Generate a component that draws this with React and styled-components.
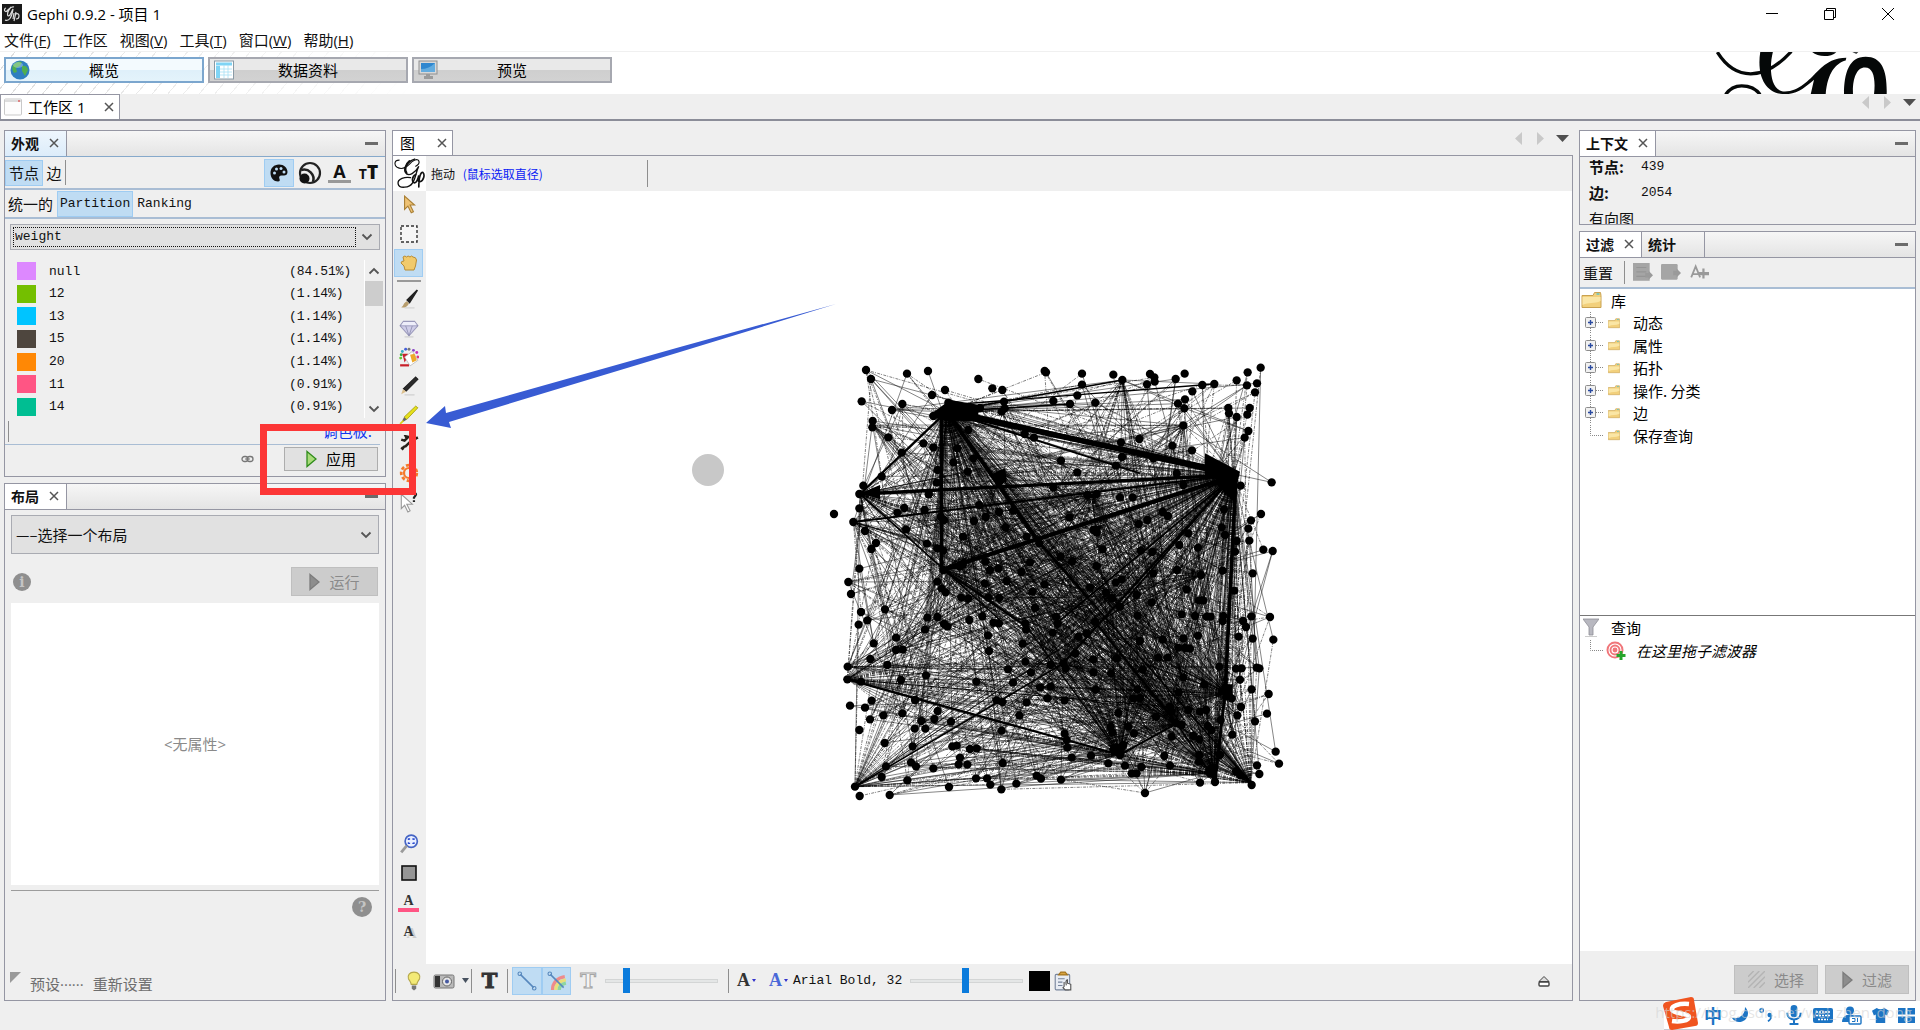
import React from "react";
import styled, { createGlobalStyle, css } from "styled-components";

const CJK = '"Noto Sans CJK SC", sans-serif';
const MONO = '"Liberation Mono", "Noto Sans CJK SC", monospace';
const LINE = "#9596a3";
const BLUE_LINE = "#a9bdd4";

const Global = createGlobalStyle`
  *, *::before, *::after { box-sizing: border-box; }
  body { margin: 0; background: #efefef; color: #111; font: 15px/20px "Open Sans", ${CJK}; }
  button, select, input { font: inherit; color: inherit; margin: 0; }
  button { padding: 0; border: 0; background: none; }
  ul { list-style: none; margin: 0; padding: 0; }
  svg { display: block; flex: none; }
`;

/* ---------- window frame ---------- */
const Window = styled.div`
  min-height: 100vh;
  display: flex;
  flex-direction: column;
  overflow: hidden;
`;
const TitleBar = styled.header`
  height: 28px;
  background: #fff;
  display: flex;
  align-items: center;
  gap: 5px;
  padding: 0 3px 0 2px;
  font-size: 15px;
  color: #000;
`;
const WindowButtons = styled.div`
  margin-left: auto;
  display: flex;
`;
const WindowButton = styled.button`
  width: 58px;
  height: 28px;
  display: grid;
  place-items: center;
`;
const MenuBar = styled.nav`
  height: 24px;
  background: #fff;
  border-bottom: 1px solid #f0f0f0;
  display: flex;
  align-items: center;
  gap: 12px;
  padding-left: 4px;
`;
const MenuItem = styled.button`
  font-family: "Open Sans", ${CJK};
  font-size: 15px;
  line-height: 20px;
`;
const Banner = styled.div`
  height: 42px;
  background: #fff;
  display: flex;
  align-items: flex-start;
  gap: 4px;
  padding: 5px 32px 0 4px;
  position: relative;
  &::before {
    content: "";
    position: absolute;
    inset: 0 auto 0 0;
    width: 420px;
    background: repeating-linear-gradient(130deg, #fff 0 11px, #dedede 11px 12px);
    mask-image: linear-gradient(90deg, #000, transparent);
  }
`;
const BannerLogo = styled.svg`
  margin: -5px 0 0 auto;
`;
const ModeButton = styled.button`
  position: relative;
  width: 200px;
  height: 26px;
  display: grid;
  grid-template-columns: 24px 1fr 24px;
  align-items: center;
  padding: 0 4px;
  color: #000;
  border: 2px solid ${(p) => (p.$active ? "#7ba6ce" : "#a6a8b0")};
  background: ${(p) =>
    p.$active
      ? "linear-gradient(#f3fafe 0 48%, #dff0fa 52%, #e4f3fb)"
      : "linear-gradient(#e9e9e9 0 48%, #cfcfcf 52%, #d2d2d2)"};
`;

/* ---------- tabs ---------- */
const WorkspaceBar = styled.div`
  height: 27px;
  display: flex;
  align-items: stretch;
  border-bottom: 2px solid #8b8d98;
`;
const DocTab = styled.div`
  display: flex;
  align-items: center;
  gap: 6px;
  padding: 0 4px 0 ${(p) => (p.$icon ? "3px" : "7px")};
  width: ${(p) => p.$w}px;
  background: #fff;
  border: 1px solid ${LINE};
  border-bottom: 0;
  color: #000;
  & > button { margin-left: auto; }
`;
const TabNav = styled.div`
  margin-left: auto;
  display: flex;
  align-items: center;
  gap: 15px;
  padding: 0 4px 8px 0;
  & > svg:last-child { margin-left: -3px; }
`;
const CloseBtn = styled.button`
  width: 12px;
  height: 14px;
  display: grid;
  place-items: center;
`;

/* ---------- workspace ---------- */
const Workspace = styled.main`
  flex: 1;
  display: grid;
  grid-template-columns: 382px minmax(0, 1fr) 337px;
  gap: 6px;
  padding: 9px 4px 0;
`;
const Column = styled.div`
  display: flex;
  flex-direction: column;
  gap: 6px;
  min-width: 0;
`;
const Panel = styled.section`
  position: relative;
  display: flex;
  flex-direction: column;
  border: 1px solid ${LINE};
  ${(p) => (p.$h ? css`height: ${p.$h}px;` : css`flex: 1;`)}
`;
const PanelHead = styled.div`
  flex: none;
  height: 26px;
  display: flex;
  align-items: stretch;
  background: linear-gradient(#f6f6f6, #e4e4e4);
  border-bottom: 1px solid ${(p) => (p.$active ? "#86a9cb" : LINE)};
`;
const PanelTab = styled.div`
  display: flex;
  align-items: center;
  gap: 9px;
  padding: 0 6px 2px;
  font: bold 14px/20px ${CJK};
  border-right: 1px solid ${LINE};
  min-width: ${(p) => p.$w || 61}px;
  background: ${(p) => (p.$idle ? "transparent" : p.$active ? "linear-gradient(#eef6fd, #dcecfa)" : "#fff")};
`;
const Minimize = styled.button`
  margin-left: auto;
  width: 28px;
  display: grid;
  place-items: center;
  &::before { content: ""; width: 13px; height: 3px; background: #6b6b6b; }
`;
const Strip = styled.div`
  flex: none;
  height: ${(p) => p.$h}px;
  display: flex;
  align-items: center;
  gap: ${(p) => p.$gap || 0}px;
  padding: ${(p) => p.$pad || "0"};
  ${(p) => p.$line && css`border-bottom: 2px solid ${BLUE_LINE};`}
`;
const Toggle = styled.button`
  height: ${(p) => p.$h || 26}px;
  min-width: ${(p) => p.$w || 0}px;
  padding: 0 2px;
  display: grid;
  place-items: center;
  font-family: ${(p) => (p.$mono ? MONO : CJK)};
  font-size: ${(p) => (p.$mono ? 13 : 15)}px;
  border: 1px solid ${(p) => (p.$on ? "#9fccf2" : "transparent")};
  background: ${(p) => (p.$on ? "#bfdcf3" : "transparent")};
`;
const VRule = styled.span`
  flex: none;
  width: 1px;
  height: ${(p) => p.$h || 25}px;
  margin-right: ${(p) => p.$mr || 0}px;
  background: #8e8e8e;
`;
const Push = styled.span`
  margin-left: auto;
`;

const ComboWrap = styled.div`
  position: relative;
  margin: ${(p) => p.$m};
  & > svg { position: absolute; right: 7px; top: calc(50% - 4px); pointer-events: none; }
`;
const Combo = styled.select`
  appearance: none;
  display: block;
  width: 100%;
  height: ${(p) => p.$h}px;
  padding: 0 4px;
  border: 1px solid #a9abb2;
  border-radius: 0;
  background: #e1e1e1;
  font-family: ${(p) => (p.$mono ? MONO : CJK)};
  font-size: ${(p) => (p.$mono ? 13 : 15)}px;
`;
const FocusRing = styled.span`
  position: absolute;
  inset: 3px 24px 3px 3px;
  border: 1px dotted #111;
  pointer-events: none;
`;

const Partition = styled.div`
  flex: none;
  height: 158px;
  margin-top: 10px;
  display: flex;
`;
const PartTable = styled.table`
  flex: 1;
  height: 158px;
  border-collapse: collapse;
  font: 13px/18px ${MONO};
  td { padding: 1px 0 0; }
  td:first-child { width: 44px; padding: 0 0 0 12px; }
  td:last-child { width: 75px; }
`;
const Swatch = styled.span`
  display: block;
  width: 19px;
  height: 18px;
  background: ${(p) => p.$c};
`;
const Scroll = styled.div`
  width: 21px;
  border-left: 1px solid #fff;
  display: flex;
  flex-direction: column;
  align-items: center;
  gap: 6px;
  padding: 7px 2px 5px 0;
  & > svg:last-child { margin-top: auto; }
`;
const Thumb = styled.span`
  align-self: stretch;
  height: 25px;
  background: #cdcdcd;
`;
const PaletteLine = styled.div`
  flex: none;
  height: 27px;
  margin-right: 5px;
  padding: 3px 8px 0 3px;
  display: flex;
  justify-content: space-between;
  border-bottom: 1px solid ${BLUE_LINE};
`;
const PaletteLink = styled.a`
  height: 16px;
  overflow: hidden;
  display: flex;
  align-items: flex-end;
  font: 15px/20px ${CJK};
  color: #1035f0;
  text-decoration: none;
  margin-top: 4px;
`;
const PushButton = styled.button`
  width: ${(p) => p.$w}px;
  height: ${(p) => p.$h}px;
  display: flex;
  align-items: center;
  justify-content: center;
  gap: 9px;
  font-family: ${CJK};
  border: 1px solid ${(p) => (p.disabled ? "#bfbfbf" : "#adadad")};
  background: ${(p) => (p.disabled ? "#cccccc" : "#e1e1e1")};
  color: ${(p) => (p.disabled ? "#8a8a8a" : "#000")};
`;
const RedFrame = styled.div`
  position: absolute;
  z-index: 3;
  left: 255px;
  top: 293px;
  width: 156px;
  height: 71px;
  border: 7px solid #fc3636;
  pointer-events: none;
`;
const PropertySheet = styled.div`
  flex: 1;
  margin: 7px 6px 0;
  background: #fff;
  display: grid;
  place-items: center;
  color: #8a8a8a;
`;
const SheetHelp = styled.div`
  flex: none;
  height: 77px;
  margin: 5px 6px 0;
  border-top: 1px solid #9c9c9c;
  padding: 6px 7px;
  display: flex;
  justify-content: flex-end;
  align-items: flex-start;
`;
const Disc = styled.button`
  width: ${(p) => p.$s}px;
  height: ${(p) => p.$s}px;
  border-radius: 50%;
  background: #8f8f8f;
  color: #c4c4c4;
  font: bold 14px/18px "DejaVu Serif", serif;
  text-align: center;
`;
const Presets = styled.div`
  flex: none;
  height: 33px;
  display: flex;
  align-items: flex-start;
  gap: 9px;
  padding: 5px 5px 0;
  color: #6e6e6e;
  & > button { line-height: 24px; }
`;

/* ---------- graph ---------- */
const GraphTabs = styled.div`
  height: 26px;
  flex: none;
  display: flex;
  border-bottom: 1px solid ${LINE};
`;
const GraphPane = styled.section`
  flex: 1;
  display: flex;
  flex-direction: column;
  border: 1px solid ${LINE};
  border-top: 0;
`;
const GraphColumn = styled.div`
  display: flex;
  flex-direction: column;
  min-width: 0;
`;
const HintBar = styled.div`
  flex: none;
  height: 35px;
  display: flex;
  align-items: center;
  gap: 5px;
  font: 12px/16px ${CJK};
  & > em { font-style: normal; color: #0a22f5; margin-right: 99px; }
`;
const LogoTile = styled.div`
  width: 33px;
  height: 35px;
  background: #fff;
  display: grid;
  place-items: center;
`;
const GraphBody = styled.div`
  flex: 1;
  display: flex;
  min-height: 0;
`;
const ToolColumn = styled.div`
  width: 33px;
  display: flex;
  flex-direction: column;
  align-items: center;
  gap: 1px;
  padding: 0 2px 19px 0;
`;
const ToolButton = styled(Toggle)`
  width: 29px;
  flex: none;
  padding: 0;
`;
const HRule = styled.span`
  width: 24px;
  height: 2px;
  margin: 2px 0;
  background: #999;
  flex: none;
`;
const Spacer = styled.span`
  flex: 1;
`;
const Canvas = styled.div`
  flex: 1;
  position: relative;
  background: #fff;
  overflow: hidden;
  & > svg { position: absolute; inset: 0; width: 100%; height: 100%; }
`;
const BottomBar = styled.div`
  flex: none;
  height: 36px;
  display: flex;
  align-items: center;
  padding: 0 22px 3px 2px;
`;
const Cell = styled.button`
  width: ${(p) => p.$w}px;
  height: 28px;
  flex: none;
  display: flex;
  align-items: center;
  justify-content: center;
  gap: 2px;
  border: 1px solid ${(p) => (p.$on ? "#9fccf2" : "transparent")};
  background: ${(p) => (p.$on ? "#bfdcf3" : "transparent")};
`;
const FontButton = styled.button`
  width: 111px;
  margin: 0 6px 0 0;
  font: 13px/20px ${MONO};
  text-align: left;
  white-space: nowrap;
`;
const Slider = styled.input`
  appearance: none;
  width: 113px;
  height: 26px;
  background: transparent;
  margin: 0 ${(p) => p.$mr}px 0 0;
  &::-webkit-slider-runnable-track { height: 4px; background: #e4e6e6; border: 1px solid #d3d5d5; }
  &::-webkit-slider-thumb { appearance: none; width: 7px; height: 25px; margin-top: -12px; background: #0a7bdc; }
`;
const BlackSwatch = styled.span`
  width: 21px;
  height: 20px;
  background: #000;
`;

/* ---------- right side ---------- */
const Facts = styled.dl`
  margin: 0;
  flex: 1;
  min-height: 0;
  overflow: hidden;
  padding: 0 9px;
  display: grid;
  grid-template-columns: 52px 1fr;
  grid-auto-rows: 26px;
  align-items: start;
  dt { font: bold 15px/20px ${CJK}; white-space: nowrap; }
  dt:last-of-type { font-weight: normal; }
  dd { margin: 0; font: 13px/20px ${MONO}; }
`;
const TreeBox = styled.div`
  background: #fff;
  ${(p) => (p.$h ? css`height: ${p.$h}px; border-bottom: 1px solid #777;` : css`flex: 1;`)}
  font: 15px/22px ${CJK};
  color: #000;
`;
const TreeRoot = styled.div`
  height: 23px;
  display: flex;
  align-items: center;
  gap: ${(p) => p.$gap}px;
  padding-left: ${(p) => p.$pl || 1}px;
`;
const TreeList = styled.ul`
  height: ${(p) => p.$h}px;
  display: flex;
  flex-direction: column;
`;
const TreeItem = styled.li`
  flex: 1;
  display: flex;
  align-items: center;
  padding-left: 5px;
  & > svg:nth-of-type(2) { margin: 0 ${(p) => (p.$it ? 10 : 13)}px 0 ${(p) => (p.$it ? 3 : 5)}px; }
  font-style: ${(p) => (p.$it ? "italic" : "normal")};
  font-size: 15px;
`;
const FilterFoot = styled.div`
  flex: none;
  height: 49px;
  display: flex;
  justify-content: flex-end;
  gap: 7px;
  padding: 14px 6px 0;
`;

/* ---------- input method strip ---------- */
const StatusBar = styled.footer`
  height: 29px;
  display: flex;
  justify-content: flex-end;
`;
const Ime = styled.div`
  position: relative;
  width: 256px;
  height: 29px;
  display: flex;
  align-items: center;
  justify-content: space-between;
  padding: 0 5px 0 40px;
  background: #fff;
  border-bottom: 1px solid #c6c9d2;
  color: #1c74c4;
  font: bold 18px/24px ${CJK};
`;
const SogouMark = styled.svg`
  position: absolute;
  left: -2px;
  top: -5px;
`;
const Watermark = styled.span`
  position: absolute;
  right: 8px;
  top: 1px;
  font: 15px/20px "Open Sans", sans-serif;
  color: rgba(212, 212, 212, 0.6);
  white-space: nowrap;
`;

/* ---------- icons ---------- */
const Svg = ({ s = 18, w, h, v, children, ...r }) => (
  <svg width={w || s} height={h || s} viewBox={v || "0 0 18 18"} fill="none" aria-hidden="true" {...r}>
    {children}
  </svg>
);
const X = () => (
  <Svg s={10} v="0 0 10 10"><path d="M1 1l8 8M9 1l-8 8" stroke="#555" strokeWidth="1.5" /></Svg>
);
const Chevron = ({ up }) => (
  <Svg w={12} h={8} v="0 0 12 8"><path d={up ? "M1.5 6.5L6 2l4.5 4.5" : "M1.5 1.5L6 6l4.5-4.5"} stroke="#555" strokeWidth="1.8" /></Svg>
);
const Play = ({ off }) => (
  <Svg w={11} h={18} v="0 0 11 18"><path d="M1 1.5L10 9 1 16.5z" fill={off ? "#8d8d8d" : "#a9db7a"} stroke={off ? "#7c7c7c" : "#2f8c1b"} strokeWidth="1.3" /></Svg>
);
const NavArrows = () => (
  <>
    <Svg w={7} h={13} v="0 0 7 13"><path d="M7 0v13L0 6.5z" fill="#c9c9c9" /></Svg>
    <Svg w={7} h={13} v="0 0 7 13"><path d="M0 0v13l7-6.5z" fill="#c9c9c9" /></Svg>
    <Svg w={13} h={7} v="0 0 13 7"><path d="M0 0h13L6.5 7z" fill="#4f4f4f" /></Svg>
  </>
);
const GephiScript = ({ s, c = "#111" }) => (
  <Svg s={s} v="0 0 30 30" stroke={c} strokeLinecap="round">
    <path d="M5 2C0 2 0 7 3 9c5 3 9 0 12-3 3-4 8-6 9-3 1 2-1 4-3 5" strokeWidth="1.1" />
    <path d="M20 1C13 3 9 10 11 14c3 5 10 0 13-6-3 6-3 12-6 16-3 5-13 6-14 1-1-5 7-7 12-6" strokeWidth="1.3" />
    <path d="M15 3c-4 3-5 9-3 11" strokeWidth="2" />
    <path d="M21 16c-4 2-4 8-1 8 2 0 3-3 4-7-1 3-1 6 1 6 4-1 5-7 3-9-2-1-4 4-4 14" strokeWidth="1.6" />
  </Svg>
);
const Folder = ({ w, h }) => (
  <Svg w={w} h={h} v="0 0 20 17">
    <path d="M.5 3.5h11l1.5-3h6l.5 3v12H.5z" fill="#f2d07c" stroke="#c9a251" />
    <path d="M1 5h18v4c-6 3-12 1-18 4z" fill="#fae6a6" />
    <path d="M15 2h3" stroke="#5fc3c4" strokeWidth="1.5" />
  </Svg>
);
const Expander = ({ open }) => (
  <Svg w={18} h={22} v="0 0 18 22">
    <path d={open ? "M5.5 0v22M11 10.5h7" : "M5.5 0v10.5h13"} stroke="#888" strokeDasharray="1 1" />
    {open && (
      <>
        <rect x=".5" y="5.5" width="10" height="10" rx="1" fill="#f1f1f1" stroke="#8d8d8d" />
        <path d="M3 10.500h5M5.500 8v5" stroke="#2a4aa0" strokeWidth="1.4" />
      </>
    )}
  </Svg>
);

const ToolIcons = {
  pointer: <Svg s={20}><path d="M5 1v12l3-3 3 6 2-1-3-6h4z" fill="#eec274" stroke="#a98036" /></Svg>,
  marquee: <Svg s={18}><rect x="1" y="1" width="16" height="16" stroke="#333" strokeWidth="1.4" strokeDasharray="3 2" fill="#f6f6f6" /></Svg>,
  hand: <Svg s={18}><path d="M3 3q2-2 3.500 0 1.500-2 3.500 0 1.500-2 3 0 3 0 3.500 3l-1 6-1.500 4H5l-1-4-3-3q0-2 3-2z" fill="#f1ca6c" stroke="#b98c35" /></Svg>,
  brush: <Svg s={20}><path d="M16.500 1l-9 9 2 2z" fill="#222" stroke="#222" strokeWidth="1.5" /><path d="M7 11l2 2c-2 4-5 4-7 3.500 2-1 2-4 5-5.500z" fill="#b79d6c" /><path d="M5 17h9" stroke="#d0d0d0" /></Svg>,
  diamond: <Svg s={20}><path d="M4 3h10l3 4-8 9-8-9z" fill="#cfcde8" stroke="#9b9abb" /><path d="M1 7h16M6 7l3 9 3-9" stroke="#8988ac" strokeWidth=".7" /><path d="M4 3.500h10l2 3H2z" fill="#eeeefa" /><path d="M5 17h8" stroke="#ccc" /></Svg>,
  bucket: (
    <Svg s={20}>
      {[["#34b04a", 2, 7], ["#36a7c9", 3, 4], ["#4560d8", 6, 2], ["#777", 9, 2], ["#8844c8", 13, 3], ["#c832b8", 16, 5], ["#e03a80", 17, 9], ["#62c832", 1.5, 10]].map(([c, x, y]) => (
        <circle key={c} cx={x} cy={y} r="1.3" fill={c} />
      ))}
      <path d="M3 6h5v3L5 14z" fill="#c8202a" /><path d="M1 16.500h8" stroke="#c8202a" strokeWidth="2" />
      <path d="M5 9l7-5 5 8-7 5z" fill="#fff" stroke="#aaa" strokeWidth=".6" /><path d="M10 7l4-1 2 6-4 2z" fill="#eda92a" />
    </Svg>
  ),
  pencil: <Svg s={20}><path d="M15 1l2 2L6.500 13.500l-2.500-2z" fill="#2c2c2c" stroke="#222" /><path d="M3.500 12l3 2-4.500 2.500z" fill="#dcbf8c" /><path d="M5 17h9" stroke="#ccc" /></Svg>,
  marker: <Svg s={20}><path d="M15 1l2 1.500L7 13l-2.500-2z" fill="#e6e01b" stroke="#a7a118" strokeWidth=".8" /><path d="M4.500 11L7 13l-3 2-1-1z" fill="#666" /><path d="M1 17l3-3" stroke="#d6d01b" strokeWidth="1.5" /></Svg>,
  wrench: <Svg s={20}><path d="M2 5l3 1 2-2-1-2c4 0 5 3 4 5l7-4M10 7l-4 4c-2 0-3 2-2 3L2 12" stroke="#27221a" strokeWidth="2.2" /></Svg>,
  gear: <Svg s={20}><circle cx="9" cy="9" r="7" stroke="#f47a2c" strokeWidth="2.500" strokeDasharray="3 2" /><circle cx="9" cy="9" r="4.500" stroke="#f47a2c" strokeWidth="2" /></Svg>,
  help: <Svg s={22} v="0 0 20 20"><path d="M3 3v13l3-3 3 6 2-1-3-6h5z" fill="#fff" stroke="#999" /><path d="M13 2.500c2-2 4 0 3 1.500l-1.500 2v1M14.500 8.500v1.500" stroke="#222" strokeWidth="2" /></Svg>,
  center: <Svg s={20}><circle cx="11" cy="6.5" r="5.500" fill="#eaf0ff" stroke="#4564c4" strokeWidth="1.5" /><path d="M8.500 5.500v-1h1.500m2 0h1.500v1m0 2v1H12m-2 0H8.500v-1" stroke="#2a4bd0" strokeWidth="1.2" /><path d="M7 10.500l-5 6" stroke="#9a9a9a" strokeWidth="2.5" /></Svg>,
  square: <Svg s={18}><rect x="2" y="2" width="14" height="14" fill="#959595" stroke="#111" strokeWidth="1.6" /></Svg>,
};

const LetterA = styled.span`
  font: bold ${(p) => p.$s || 14}px/${(p) => (p.$s || 14) + 1}px "Liberation Serif", serif;
  color: ${(p) => p.$c || "#333"};
  border-bottom: ${(p) => (p.$bar ? `4px solid ${p.$bar}` : 0)};
  padding: 0 ${(p) => (p.$bar ? 5 : 0)}px;
  text-shadow: ${(p) => (p.$shadow ? "3px 2px 0 #ccc" : "none")};
`;
const SansA = styled.span`
  font: bold 18px/18px "Open Sans", sans-serif;
  border-bottom: 3px solid #999;
  padding: 0 5px;
`;
const SizeT = styled.span`
  font: bold 14px/20px "Open Sans", sans-serif;
  & > b { font-size: 19px; }
`;
const SlabT = styled.span`
  font: bold 21px/22px "DejaVu Serif", serif;
  color: ${(p) => (p.$hollow ? "#f4f4f4" : "#333")};
  -webkit-text-stroke: 1px ${(p) => (p.$hollow ? "#a5a5a5" : "#333")};
`;
const DropMark = () => <Svg w={7} h={5} v="0 0 7 5"><path d="M0 0h7L3.500 5z" fill="#47515f" /></Svg>;
const BlueMark = () => <Svg w={4} h={3} v="0 0 7 5"><path d="M0 0h7L3.500 5z" fill="#33c" /></Svg>;

/* ---------- network data ---------- */
const NODES = `198 90 213 117 321 101 384 93 435 150 396 165 185 184 307 192 276 210 218 243 217 262 265 292 305 338 370 310 400 322 445 188 535 117 577 145 607 150 612 185 614 205 605 215 734 93 738 97 760 183 810 192 832 166 846 101 846 134 886 188 940 104 967 120 1050 102 1063 112 1064 125 1041 133 1127 117 1154 101 1177 154 1207 135 1243 132 1155 178 1134 191 1153 205 1150 256 1310 121 1343 97 1382 83 1341 136 1371 130 1365 157 1285 204 1287 220 1310 231 1349 204 1342 224 1345 273 1334 293 1117 317 1176 331 1018 297 963 307 966 351 948 377 1060 355 783 362 832 397 674 282 702 293 760 442 862 465 890 462 960 472 998 472 245 409 190 437 178 462 178 505 160 546 195 573 102 522 228 609 214 627 178 686 145 726 153 762 183 816 202 841 176 854 255 808 221 910 288 893 308 928 288 930 211 957 262 975 143 980 142 1018 183 1025 303 1020 215 1082 195 1103 150 1097 210 1138 250 1126 307 1120 178 1170 254 1209 338 1219 333 1267 348 1279 258 1279 245 1311 165 1340 179 1368 269 1365 322 1321 400 1285 447 1341 480 1253 476 1273 502 1274 457 1219 470 1217 510 1227 530 1225 528 1315 561 1315 571 1334 604 1348 608 1269 649 1331 710 1307 723 1316 783 1319 815 1253 802 1223 800 1200 794 1181 873 1247 925 1270 960 1245 975 1277 995 1300 1010 1300 1024 1281 1035 1359 1093 1248 1110 1277 1200 1328 1245 1326 1230 1300 1243 1284 1197 1265 1198 1245 1260 1245 1308 1294 1322 1306 1355 1335 1371 1276 1378 1302 1437 1271 1427 1235 1365 1144 1401 1121 1406 1062 1355 1048 1323 1101 1312 1126 1297 1184 1320 1019 1370 983 1378 985 1325 985 1308 986 1420 899 1410 831 1354 829 1329 843 1338 861 1316 890 1358 896 1358 700 1418 633 1390 629 1348 602 1345 566 1353 541 1383 522 1415 427 1322 437 1300 405 1305 635 1310 603 1275 585 1265 562 1272 508 1268 692 1303 752 1270 828 1268 843 1194 623 1165 580 1138 615 1131 690 1203 705 1160 748 1197 781 1210 782 1145 823 1185 828 1220 830 1232 830 1194 887 1150 895 1135 923 1155 924 1170 926 1103 953 1075 953 1088 899 1020 903 1013 827 1055 787 1010 765 965 718 947 727 918 757 935 775 960 800 870 742 885 845 860 880 835 890 826 940 790 970 797 985 752 975 720 1042 752 1040 742 1075 794 1081 680 1087 658 1126 605 1172 607 1086 590 1081 639 1028 624 988 529 1025 567 933 564 886 547 829 508 840 580 848 597 850 676 850 678 868 668 911 676 965 693 998 705 804 698 754 733 733 768 830 773 851 758 878 620 724 664 696 690 667 595 686 570 690 556 664 554 730 565 772 598 774 484 773 505 775 412 725 425 745 437 757 382 833 412 831 375 869 432 852 442 860 378 1006 345 1080 413 1113 403 1137 364 1143 344 1166 376 1166 453 1145 381 611 412 625 430 632 318 568 313 504 292 518 374 510 386 463 422 530 432 540 489 590 522 543 557 531 597 516 640 512 616 562 680 590 718 610 538 495 808 532 880 570 890 578 782 650 817 664 908 628 890 678 1022 632 1057 636 1060 700 1016 552 1042 540 1088 516 1104 528 1150 435 1130 400 503 395 460 367 472 325 505 270 520 355 590 410 605 402 413 390 410 428 470 208 510 205 540 204 455 230 400 228 950 955 880 958 880 997 933 1000 1028 988 1012 1048 887 1049 955 1119 1000 1075 1020 1074 1136 1057 1150 1012 1213 1034 1258 980 1110 1100 1115 1115 1165 1110 1200 1115 1218 1110 1130 1150 1145 1155 1115 1190 1068 1130 1180 1188 1198 1198 1223 1158 1235 1170 1262 1140 1280 1050 1295 1075 985 1160 1002 1180 932 1160 938 1178 940 1230 970 1215 480 680 430 690`
  .split(/\s+/)
  .reduce((acc, n, i, all) => (i % 2 ? acc : [...acc, [+n, +all[i + 1]]]), []);

const HUBS = [
  [440, 215, 0.54], [1300, 405, 0.8], [180, 462, 0.18], [430, 688, 0.3], [142, 1018, 0.14],
  [165, 1340, 0.12], [960, 1242, 0.4], [1240, 1300, 0.42], [967, 120, 0.09], [1130, 1150, 0.42],
  [1352, 1328, 0.26], [1280, 1060, 0.35], [160, 546, 0.1], [218, 255, 0.07], [600, 405, 0.18],
  [875, 465, 0.2], [940, 770, 0.2], [1150, 256, 0.05], [145, 726, 0.05], [143, 980, 0.08],
  [1200, 705, 0.16], [790, 970, 0.13],
];

const HEAVY = [
  [440, 215, 1300, 400, 17], [520, 228, 1230, 390, 14], [1300, 405, 180, 462, 10], [424, 215, 424, 690, 11],
  [1300, 408, 430, 688, 13], [440, 215, 180, 462, 7], [440, 215, 720, 610, 12], [720, 610, 865, 775, 9],
  [865, 775, 1352, 1328, 5], [1308, 410, 1275, 1060, 11], [1275, 1060, 1245, 1326, 9], [160, 546, 1300, 405, 6],
  [142, 1018, 960, 1245, 7], [1300, 410, 770, 850, 6], [1300, 410, 790, 970, 6], [790, 970, 165, 1340, 5], [180, 462, 600, 840, 5],
  [430, 690, 680, 860, 6], [142, 1018, 1220, 1110, 3], [967, 120, 440, 215, 5], [445, 195, 1243, 132, 4],
  [440, 215, 1020, 400, 6], [1130, 1150, 960, 1245, 6], [885, 845, 1130, 1150, 7], [1300, 405, 960, 800, 5],
  [440, 215, 810, 192, 5], [680, 860, 960, 1245, 4], [1130, 1150, 1245, 1320, 5], [165, 1340, 345, 1080, 2],
];

function buildEdges() {
  let seed = 20172;
  const rnd = () => {
    seed = (seed * 1664525 + 1013904223) % 4294967296;
    return seed / 4294967296;
  };
  const solid = [];
  const dashed = [];
  const add = (a, b) => (rnd() < 0.5 ? dashed : solid).push(`M${a[0]} ${a[1]}L${b[0]} ${b[1]}`);
  HUBS.forEach((hub) => {
    NODES.forEach((n) => {
      const outer = n[0] > 1335 || n[1] < 170 || n[0] < 240;
      if (rnd() < hub[2] * (outer ? 0.4 : 1)) add(hub, n);
    });
  });
  NODES.forEach((n) => {
    const m = NODES[Math.floor(rnd() * NODES.length)];
    const d = Math.hypot(n[0] - m[0], n[1] - m[1]);
    const sparse = n[0] < 600 && n[1] > 700;
    if (d < 700 && !sparse) add(n, m);
  });
  return [solid.join(""), dashed.join("")];
}
const [SOLID, DASHED] = buildEdges();

const Network = () => (
  <svg role="img" aria-label="Network graph">
    <g transform="translate(374 149) scale(0.33333)">
      <path d={SOLID} stroke="#000" strokeWidth="1.7" opacity="0.85" fill="none" />
      <path d={DASHED} stroke="#000" strokeWidth="2" strokeDasharray="9 4 3 3" opacity="0.75" fill="none" />
      {HEAVY.map(([a, b, c, d, w], i) => (
        <line key={i} x1={a} y1={b} x2={c} y2={d} stroke="#000" strokeWidth={w} />
      ))}
      <path d="M385 228L450 180 540 195 530 245 425 240zM1215 340L1320 395 1310 440 1215 405zM180 460L240 435V478zM430 690L500 650V685zM1265 1033h33v48h-30zM570 405l45-20 5 35-20 20zM870 560l35-5-8 35zM925 1215l60-10-20 50zM1225 1280l25-5v50h-12zM1245 430l55-30 5 90z" fill="#000" />
      {NODES.map(([x, y], i) => (
        <circle key={i} cx={x} cy={y} r="12.5" fill="#000" />
      ))}
    </g>
    <circle cx="282" cy="279" r="16" fill="#c8c8c8" />
    <path d="M0 232L19 215l1 7L254 156l156-43L254 161 23 231l2 6z" fill="#385bd3" />
  </svg>
);

const PARTS = [
  ["#dd88ff", "null", "(84.51%)"], ["#74bf00", "12", "(1.14%)"], ["#00c4ff", "13", "(1.14%)"],
  ["#4e463e", "15", "(1.14%)"], ["#ff8805", "20", "(1.14%)"], ["#ff5584", "11", "(0.91%)"], ["#00be92", "14", "(0.91%)"],
];
const MENUS = [["文件", "F"], ["工作区"], ["视图", "V"], ["工具", "T"], ["窗口", "W"], ["帮助", "H"]];
const LIBRARY = ["动态", "属性", "拓扑", "操作. 分类", "边", "保存查询"];

const Close = ({ label }) => <CloseBtn aria-label={`关闭 ${label}`}><X /></CloseBtn>;

function AppearancePanel() {
  return (
    <Panel $h={347}>
      <PanelHead $active>
        <PanelTab $active>外观<Close label="外观" /></PanelTab>
        <Minimize aria-label="最小化" />
      </PanelHead>
      <Strip $h={33} $line $pad="0 2px 0 0">
        <Toggle $on $w={38}>节点</Toggle>
        <Toggle $w={22}>边</Toggle>
        <VRule />
        <Push />
        <Toggle $on $w={30} $h={28} aria-label="颜色">
          <Svg s={18}><path d="M9 .5C4 .5.5 4 .5 9S4 17.500 8 17.500c2 0 2-1.500 1.500-2.500-1-2 0-3.500 2-3.500H14c2 0 3.500-1 3.500-3.500C17.500 4 14 .5 9 .5z" fill="#111" /><g fill="#bfdcf3"><circle cx="4.5" cy="9" r="1.5" /><circle cx="6.5" cy="5" r="1.5" /><circle cx="11" cy="4.5" r="1.5" /><circle cx="14" cy="8" r="1.5" /></g></Svg>
        </Toggle>
        <Toggle $w={31} aria-label="尺寸">
          <Svg s={24} v="0 0 24 24"><circle cx="12" cy="12" r="10" stroke="#222" strokeWidth="2.2" /><path d="M3 9a9.500 9.500 0 0 1 12 12" stroke="#222" strokeWidth="2.5" /><circle cx="6.5" cy="17.5" r="5" fill="#111" /></Svg>
        </Toggle>
        <Toggle $w={29} aria-label="标签颜色"><SansA>A</SansA></Toggle>
        <Toggle $w={29} aria-label="标签尺寸"><SizeT>T<b>T</b></SizeT></Toggle>
      </Strip>
      <Strip $h={29} $line $gap={1}>
        <Toggle $w={50}>统一的</Toggle>
        <Toggle $mono $on $w={75}>Partition</Toggle>
        <Toggle $mono>Ranking</Toggle>
      </Strip>
      <ComboWrap $m="5px 5px 0">
        <Combo $h={26} $mono aria-label="属性"><option>weight</option></Combo>
        <FocusRing />
        <Chevron />
      </ComboWrap>
      <Partition>
        <PartTable>
          <tbody>
            {PARTS.map(([c, n, p]) => (
              <tr key={n}><td><Swatch $c={c} /></td><td>{n}</td><td>{p}</td></tr>
            ))}
          </tbody>
        </PartTable>
        <Scroll><Chevron up /><Thumb /><Chevron /></Scroll>
      </Partition>
      <PaletteLine><VRule $h={21} /><PaletteLink href="#palette">调色板:</PaletteLink></PaletteLine>
      <Strip $h={31} $gap={30} $pad="0 7px 3px 0">
        <Push />
        <Svg w={13} h={8} v="0 0 13 8"><rect x="1" y="1.5" width="6" height="5" rx="2.5" stroke="#777" strokeWidth="1.3" /><rect x="6" y="1.5" width="6" height="5" rx="2.5" stroke="#777" strokeWidth="1.3" /><path d="M4 4h5" stroke="#777" /></Svg>
        <PushButton $w={94} $h={24}><Play />应用</PushButton>
      </Strip>
      <RedFrame />
    </Panel>
  );
}

function LayoutPanel() {
  return (
    <Panel>
      <PanelHead>
        <PanelTab>布局<Close label="布局" /></PanelTab>
        <Minimize aria-label="最小化" />
      </PanelHead>
      <ComboWrap $m="5px 6px 0">
        <Combo $h={39} aria-label="布局"><option>—–选择一个布局</option></Combo>
        <Chevron />
      </ComboWrap>
      <Strip $h={42} $pad="13px 7px 0 8px">
        <Disc $s={18} aria-label="信息">i</Disc>
        <Push />
        <PushButton disabled $w={87} $h={29}><Play off />运行</PushButton>
      </Strip>
      <PropertySheet>&lt;无属性&gt;</PropertySheet>
      <SheetHelp><Disc $s={20} aria-label="帮助">?</Disc></SheetHelp>
      <Presets>
        <Svg s={11} v="0 0 11 11"><path d="M0 0h11L0 11z" fill="#999" /></Svg>
        <button>预设······</button>
        <button>重新设置</button>
      </Presets>
    </Panel>
  );
}

function GraphPanel() {
  const tool = (id, label, on) => (
    <ToolButton key={id} $h={28} $on={on} aria-label={label}>{ToolIcons[id]}</ToolButton>
  );
  return (
    <GraphColumn>
      <GraphTabs>
        <DocTab $w={61}>图<Close label="图" /></DocTab>
        <TabNav><NavArrows /></TabNav>
      </GraphTabs>
      <GraphPane>
        <HintBar>
          <LogoTile><GephiScript s={31} /></LogoTile>
          <span>拖动</span><em>&nbsp;(鼠标选取直径)</em><VRule $h={27} />
        </HintBar>
        <GraphBody>
          <ToolColumn>
            {tool("pointer", "直接选择")}
            {tool("marquee", "矩形选择")}
            {tool("hand", "拖动", true)}
            <HRule />
            {tool("brush", "画笔")}
            {tool("diamond", "大小")}
            {tool("bucket", "填充")}
            {tool("pencil", "节点铅笔")}
            {tool("marker", "边铅笔")}
            {tool("wrench", "最短路径")}
            {tool("gear", "热图")}
            {tool("help", "编辑")}
            <Spacer />
            {tool("center", "居中")}
            {tool("square", "重置颜色")}
            <ToolButton $h={28} aria-label="重置标签颜色"><LetterA $bar="#ff5584">A</LetterA></ToolButton>
            <ToolButton $h={28} aria-label="重置标签"><LetterA $shadow>A</LetterA></ToolButton>
          </ToolColumn>
          <Canvas><Network /></Canvas>
        </GraphBody>
        <BottomBar>
          <VRule $h={24} />
          <Cell $w={35} aria-label="背景"><Svg s={20}><path d="M9 1c-4 0-6 3-5 6 1 2 2 2 2.500 5h5c.5-3 1.500-3 2.500-5 1-3-1-6-5-6z" fill="#f3ea76" stroke="#b5a74a" /><path d="M7 13h4v3l-2 1.500L7 16z" fill="#777" /></Svg></Cell>
          <Cell $w={40} aria-label="截图"><Svg w={22} h={18} v="0 0 22 18"><rect x="1" y="3" width="20" height="13" rx="1.5" fill="#b9b9b9" stroke="#777" /><rect x="2" y="4" width="5" height="11" fill="#333" /><circle cx="14" cy="9.5" r="4.5" fill="#e7e7e7" stroke="#666" /><circle cx="14" cy="9.5" r="2" fill="#4558a0" /></Svg>&nbsp;<DropMark /></Cell>
          <VRule $h={24} />
          <Cell $w={35} aria-label="节点标签"><SlabT>T</SlabT></Cell>
          <VRule $h={24} $mr={4} />
          <Cell $w={30} $on aria-label="显示边"><Svg s={20}><path d="M3 3l12 12" stroke="#5788bd" strokeWidth="1.4" /><circle cx="2.5" cy="2.5" r="1.6" stroke="#5788bd" /><circle cx="15.5" cy="15.5" r="1.6" stroke="#5788bd" /></Svg></Cell>
          <Cell $w={29} $on aria-label="边颜色"><Svg s={20}><path d="M5 17C5 11 9 6 16 5" stroke="#ee8b8b" strokeWidth="3" /><path d="M8 17c0-5 3-8 9-9" stroke="#e9df7a" strokeWidth="3" /><path d="M11 17c0-3 2-5 6-6" stroke="#8fd6a0" strokeWidth="3" /><path d="M3 3l12 12" stroke="#5788bd" strokeWidth="1.4" /><circle cx="2.5" cy="2.5" r="1.6" stroke="#5788bd" /></Svg></Cell>
          <Cell $w={34} aria-label="边标签"><SlabT $hollow>T</SlabT></Cell>
          <Slider type="range" defaultValue="16" $mr={10} aria-label="边粗细" />
          <VRule $h={24} />
          <Cell $w={35} aria-label="字号模式"><LetterA $s={18}>A</LetterA><BlueMark /></Cell>
          <Cell $w={29} aria-label="颜色模式"><LetterA $s={18} $c="#4a68d8">A</LetterA><BlueMark /></Cell>
          <FontButton>Arial Bold, 32</FontButton>
          <Slider type="range" defaultValue="49" $mr={6} aria-label="字号" />
          <BlackSwatch />
          <Cell $w={26} aria-label="属性设置"><Svg s={20}><rect x="2" y="3" width="13" height="14" rx="1" fill="#e8ecf3" stroke="#76849c" /><path d="M5 3.500l2-2.500h4l2 2.500z" fill="#d9a441" stroke="#a47520" /><path d="M4.500 7h6M4.500 10h4M4.500 13h4" stroke="#76849c" /><path d="M10 10v4l-1 1 2 2h5v-5l-3-1V8q-2 0-1 5" fill="#fff" stroke="#555" /></Svg></Cell>
          <Push />
          <Svg s={12} v="0 0 12 12"><path d="M1 6.500L6 1.500l5 5z" fill="#ddd" stroke="#444" /><rect x="1" y="7" width="10" height="4" rx="1" fill="#fff" stroke="#444" strokeWidth="1.4" /></Svg>
        </BottomBar>
      </GraphPane>
    </GraphColumn>
  );
}

function FilterPanel() {
  return (
    <Panel>
      <PanelHead>
        <PanelTab>过滤<Close label="过滤" /></PanelTab>
        <PanelTab $idle $w={63}>统计</PanelTab>
        <Minimize aria-label="最小化" />
      </PanelHead>
      <Strip $h={31} $line $gap={8}>
        <Toggle>重置</Toggle>
        <VRule $h={23} />
        <Svg s={20}><rect x="0" y="0" width="15" height="16" fill="#a5a5a5" /><path d="M3 4h9M3 8h9M3 12h9" stroke="#959595" /><path d="M11 9h3V7l4 4-4 4v-2h-3z" fill="#9a9a9a" /></Svg>
        <Svg s={20}><rect x="0" y="1" width="15" height="14" rx="1" fill="#a5a5a5" /><path d="M11 7h3V5l4 4-4 4v-2h-3z" fill="#9a9a9a" /></Svg>
        <Svg s={20}><path d="M2 13L6 3l4 10M3.500 10h5" stroke="#999" strokeWidth="1.6" /><path d="M9 8h3V5h2v3h4v3h-4v3h-2v-3H9z" fill="#9a9a9a" /></Svg>
      </Strip>
      <TreeBox $h={327}>
        <TreeRoot $gap={9}><Folder w={21} h={17} />库</TreeRoot>
        <TreeList $h={135}>
          {LIBRARY.map((t, i) => (
            <TreeItem key={t}>
              <Expander open={i < 5} />
              <Folder w={12} h={11} />
              {t}
            </TreeItem>
          ))}
        </TreeList>
      </TreeBox>
      <TreeBox>
        <TreeRoot $gap={12} $pl={3}><Svg w={16} h={20} v="0 0 16 20"><path d="M0 1h16L10 9v8H6V9z" fill="#b8b8c0" stroke="#8d8d96" strokeWidth=".8" /><path d="M2 18.500h12" stroke="#ccc" /></Svg>查询</TreeRoot>
        <TreeList $h={23}>
          <TreeItem $it>
            <Expander />
            <Svg s={20} v="0 0 20 20"><circle cx="9" cy="9" r="8.5" fill="#f0767a" /><circle cx="9" cy="9" r="6" stroke="#fff" strokeWidth="1.1" /><circle cx="9" cy="9" r="3" stroke="#fff" strokeWidth="1.1" /><path d="M15 10v9M10.500 14.500h9" stroke="#27a52c" strokeWidth="3" /></Svg>
            在这里拖子滤波器
          </TreeItem>
        </TreeList>
      </TreeBox>
      <FilterFoot>
        <PushButton disabled $w={84} $h={29}><Svg s={17}><path d="M0 6l6-6M0 12L12 0M0 18L18 0M6 18L18 6M12 18l6-6" stroke="#b4b4b4" strokeWidth="1.5" /></Svg>选择</PushButton>
        <PushButton disabled $w={84} $h={29}><Play off />过滤</PushButton>
      </FilterFoot>
    </Panel>
  );
}

function InputMethodBar() {
  return (
    <StatusBar>
      <Ime>
        <SogouMark width="36" height="34" viewBox="0 0 36 34">
          <path d="M4 6L29 1q3 0 3 3l4 23q0 3-3 3L10 34q-3 0-3-3L1 10q0-3 3-4z" fill="#f0541f" />
          <path d="M27 8C17 7 9 10 10 14c1 4 17 3 17 7 0 4-10 5-17 4" fill="none" stroke="#fff" strokeWidth="4.5" />
        </SogouMark>
        <span>中</span>
        <Svg s={18}><path d="M14 1c4 4 4 9 0 13-4 3-10 3-13-2 8 1 13-3 13-11z" fill="#1c74c4" /></Svg>
        <Svg s={16}><circle cx="3" cy="4" r="2" stroke="#1c74c4" strokeWidth="1.6" /><circle cx="12" cy="9" r="2.5" fill="#1c74c4" /><path d="M14 9q0 5-4 7" stroke="#1c74c4" strokeWidth="1.8" /></Svg>
        <Svg s={20}><rect x="6" y="0" width="6" height="11" rx="3" fill="#1c74c4" /><path d="M3 7c0 8 12 8 12 0M9 13v4M5 17h8" stroke="#1c74c4" strokeWidth="1.8" /></Svg>
        <Svg w={20} h={17} v="0 0 20 17"><rect x="0" y="1" width="20" height="15" rx="2" fill="#1c74c4" /><path d="M3 5h14M3 8.500h14M5 12.500h10" stroke="#fff" strokeWidth="1.5" strokeDasharray="2 1" /></Svg>
        <Svg w={20} h={19} v="0 0 20 19"><circle cx="8" cy="4.5" r="4" fill="#1c74c4" /><path d="M0 16c0-10 16-10 16 0z" fill="#1c74c4" /><rect x="7" y="10" width="12" height="8" rx="1" fill="#fff" stroke="#1c74c4" strokeWidth="1.4" /><path d="M10 12.500h3v3h-3M15.500 12v4" stroke="#1c74c4" /></Svg>
        <Svg w={17} h={17}><path d="M5 1q4 3 8 0l5 3-2 5-2-1v9H4V8L2 9 0 4z" fill="#1c74c4" /></Svg>
        <Svg w={17} h={17}><path d="M0 1h8v7H0zM10 1h8v7h-8zM0 10h8v7H0zM10 10h8v7h-8z" fill="#1c74c4" /></Svg>
        <Watermark>https://blog.csdn.net/wei_zhen_dong</Watermark>
      </Ime>
    </StatusBar>
  );
}

export default function App() {
  return (
    <Window>
      <Global />
      <TitleBar>
        <Svg s={20} v="0 0 20 20"><rect width="20" height="20" fill="#1a1a1a" /><path d="M4 4c-3 1-1 5 1 3 3-3 4-5 7-4M9 3C4 9 5 14 8 11l3-6c-1 8-4 13-8 11M12 9l-1 6M14 8l-2 9M14 10c4-2 4 5 0 5" stroke="#ddd" strokeWidth="1.2" /></Svg>
        <span>Gephi 0.9.2 - 项目 1</span>
        <WindowButtons>
          <WindowButton aria-label="最小化"><Svg s={12} v="0 0 12 12"><path d="M0 5.500h12" stroke="#000" /></Svg></WindowButton>
          <WindowButton aria-label="还原"><Svg s={12} v="0 0 12 12"><path d="M.5 2.500h9v9h-9zM2.500 2.500v-2h9v9h-2" stroke="#000" /></Svg></WindowButton>
          <WindowButton aria-label="关闭"><Svg s={12} v="0 0 12 12"><path d="M0 0l12 12M12 0L0 12" stroke="#000" /></Svg></WindowButton>
        </WindowButtons>
      </TitleBar>
      <MenuBar>
        {MENUS.map(([t, k]) => (
          <MenuItem key={t}>{t}{k && <>(<u>{k}</u>)</>}</MenuItem>
        ))}
      </MenuBar>
      <Banner>
        <ModeButton $active>
          <Svg s={20} v="0 0 20 20"><circle cx="10" cy="10" r="9.5" fill="#2f7fc0" /><path d="M3 5q5-5 9-3l-2 4-4 2 1 4-3 1q-3-4-1-8zM12 6q5-1 6 4l-3 6-3-5z" fill="#4fae4f" /><ellipse cx="8" cy="5" rx="5" ry="3" fill="#fff" opacity=".3" /></Svg>
          概览
        </ModeButton>
        <ModeButton>
          <Svg s={20} v="0 0 20 20"><rect x=".5" y="1" width="19" height="18" fill="#fff" stroke="#8a9aa5" /><path d="M2 2.500h16v3H2zM2 6h4v12H2z" fill="#7fd4f5" /><path d="M6 9h12M6 12h12M6 15h12M10 5v13M14 5v13" stroke="#a7dff5" strokeWidth=".8" /></Svg>
          数据资料
        </ModeButton>
        <ModeButton>
          <Svg s={20} v="0 0 20 20"><rect x="1" y="1" width="18" height="13" fill="#d8d8d8" stroke="#8f8f8f" /><rect x="3" y="3" width="14" height="9" fill="#2f87cf" /><path d="M3 9q8 0 14-6v9H3z" fill="#63acdf" /><path d="M8 14h4v2h3v3H6v-3h2z" fill="#9b9b9b" /></Svg>
          预览
        </ModeButton>
        <BannerLogo width="173" height="42" viewBox="468 157 519 125" fill="#050808" aria-hidden="true">
          <path d="M475 157C505 205 540 222 575 222c50 0 90-32 122-67M500 284c15-22 35-26 48-26 22 0 42 7 55 26" fill="none" stroke="#050808" strokeWidth="10" />
          <path d="M604 155h38c-12 45-10 120 36 120 42 0 72-35 97-60 30-30 55-41 87-41l-2 8c-30 8-55 38-60 102h-45l10-44c-25 22-50 43-85 43-60 0-88-53-76-128z" />
          <path d="M758 155c17 18 57 18 74 2zM855 284c0-64 15-113 65-113s65 44 63 113h-38c5-44 0-81-27-81s-38 37-36 81zM880 157l12 5 6-5z" />
        </BannerLogo>
      </Banner>
      <WorkspaceBar>
        <DocTab $w={120} $icon>
          <Svg s={18}><rect x=".5" y="1" width="17" height="16" rx="1" fill="#fdfdfd" stroke="#c9c9c9" /><path d="M1 3h16" stroke="#ddd" strokeWidth="2" /><path d="M14 3h2" stroke="#d66" strokeWidth="1.5" /></Svg>
          工作区 1
          <Close label="工作区 1" />
        </DocTab>
        <TabNav><NavArrows /></TabNav>
      </WorkspaceBar>
      <Workspace>
        <Column>
          <AppearancePanel />
          <LayoutPanel />
        </Column>
        <GraphPanel />
        <Column>
          <Panel $h={95}>
            <PanelHead>
              <PanelTab $w={76}>上下文<Close label="上下文" /></PanelTab>
              <Minimize aria-label="最小化" />
            </PanelHead>
            <Facts>
              <dt>节点:</dt><dd>439</dd>
              <dt>边:</dt><dd>2054</dd>
              <dt>有向图</dt>
            </Facts>
          </Panel>
          <FilterPanel />
        </Column>
      </Workspace>
      <InputMethodBar />
    </Window>
  );
}
